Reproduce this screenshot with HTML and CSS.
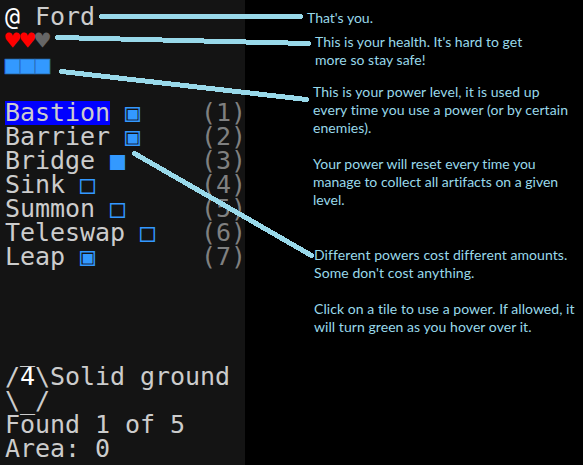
FILE: index.html
```html
<!DOCTYPE html>
<html lang="en">
<head>
<meta charset="utf-8">
<title>Status guide</title>
<link rel="stylesheet" href="styles.css">
</head>
<body>
<main class="screen">
  <section class="panel">
    <div class="row"><span class="bright">@</span> Ford</div>
    <div class="row"><span class="heart">♥♥</span><span class="lost">♥</span></div>
    <div class="row power meter">■■■</div>
    <div class="row"></div>
    <div class="row skill"><span><span class="selected">Bastion</span> <span class="power">▣</span></span><span class="key">(1)</span></div>
    <div class="row skill"><span>Barrier <span class="power">▣</span></span><span class="key">(2)</span></div>
    <div class="row skill"><span>Bridge <span class="power">■</span></span><span class="key">(3)</span></div>
    <div class="row skill"><span>Sink <span class="power">□</span></span><span class="key">(4)</span></div>
    <div class="row skill"><span>Summon <span class="power">□</span></span><span class="key">(5)</span></div>
    <div class="row skill"><span>Teleswap <span class="power">□</span></span><span class="key">(6)</span></div>
    <div class="row skill"><span>Leap <span class="power">▣</span></span><span class="key">(7)</span></div>
    <div class="info">
      <div class="row"> _</div>
      <div class="row">/<span class="bright">4</span>\Solid ground</div>
      <div class="row">\_/</div>
      <div class="row">Found 1 of 5</div>
      <div class="row">Area: 0</div>
    </div>
  </section>
  <section class="notes">
    <p class="note you">That's you.</p>
    <p class="note health">This is your health. It's hard to get<br>more so stay safe!</p>
    <p class="note level">This is your power level, it is used up<br>every time you use a power (or by certain<br>enemies).</p>
    <p class="note reset">Your power will reset every time you<br>manage to collect all artifacts on a given<br>level.</p>
    <p class="note cost">Different powers cost different amounts.<br>Some don't cost anything.</p>
    <p class="note click">Click on a tile to use a power. If allowed, it<br>will turn green as you hover over it.</p>
  </section>
  <svg class="pointers" viewBox="0 0 583 465" aria-hidden="true">
    <path d="M101.500 16.500H300.500M57.500 37.500L308.500 43.500M61.500 71.500L306.500 99.500M134.500 153.500L311.500 255.500"/>
  </svg>
</main>
</body>
</html>
```
FILE: styles.css
```css
body {
  margin: 0;
  background: #000;
}

.screen {
  position: relative;
  display: flex;
  width: 583px;
  height: 465px;
  overflow: hidden;
}

.panel {
  box-sizing: border-box;
  display: flex;
  flex-direction: column;
  width: 245px;
  padding: 5px 0 4px 5px;
  background: #141414;
  color: #ccc;
  font: 25px/24px "DejaVu Sans Mono", monospace;
  letter-spacing: -0.05px;
}

.row {
  height: 24px;
  white-space: pre;
}

.skill {
  display: flex;
  justify-content: space-between;
}

.info {
  margin-top: 72px;
}

.bright {
  color: #fff;
}

.heart {
  color: #f00;
}

.lost {
  color: #666;
}

.power {
  color: #39f;
}

.meter {
  -webkit-text-stroke: 0.7px #2a72bd;
}

.key {
  margin-right: -1px;
  color: #808080;
}

.selected {
  display: inline-block;
  height: 24px;
  background: #00f;
}

.notes {
  padding: 9px 0 0 62px;
  color: #99d9ea;
  font: 14px/18px Lato, sans-serif;
  font-variant-ligatures: none;
  white-space: nowrap;
}

.note {
  margin: 0 0 18px 6px;
}

.note.you {
  margin: 0 0 6px;
}

.note.health {
  margin-left: 8px;
  margin-bottom: 14px;
  letter-spacing: 0.03px;
}

.note.level {
  letter-spacing: 0.08px;
}

.note.reset {
  margin-bottom: 37px;
}

.note.cost,
.note.click {
  margin-left: 7px;
}

.note.cost {
  letter-spacing: 0.08px;
}

.note.click {
  letter-spacing: 0.06px;
}

.pointers {
  position: absolute;
  inset: 0;
  width: 583px;
  height: 465px;
  fill: none;
  stroke: #99d9ea;
  stroke-width: 5;
  stroke-linecap: round;
  shape-rendering: crispEdges;
}
```
